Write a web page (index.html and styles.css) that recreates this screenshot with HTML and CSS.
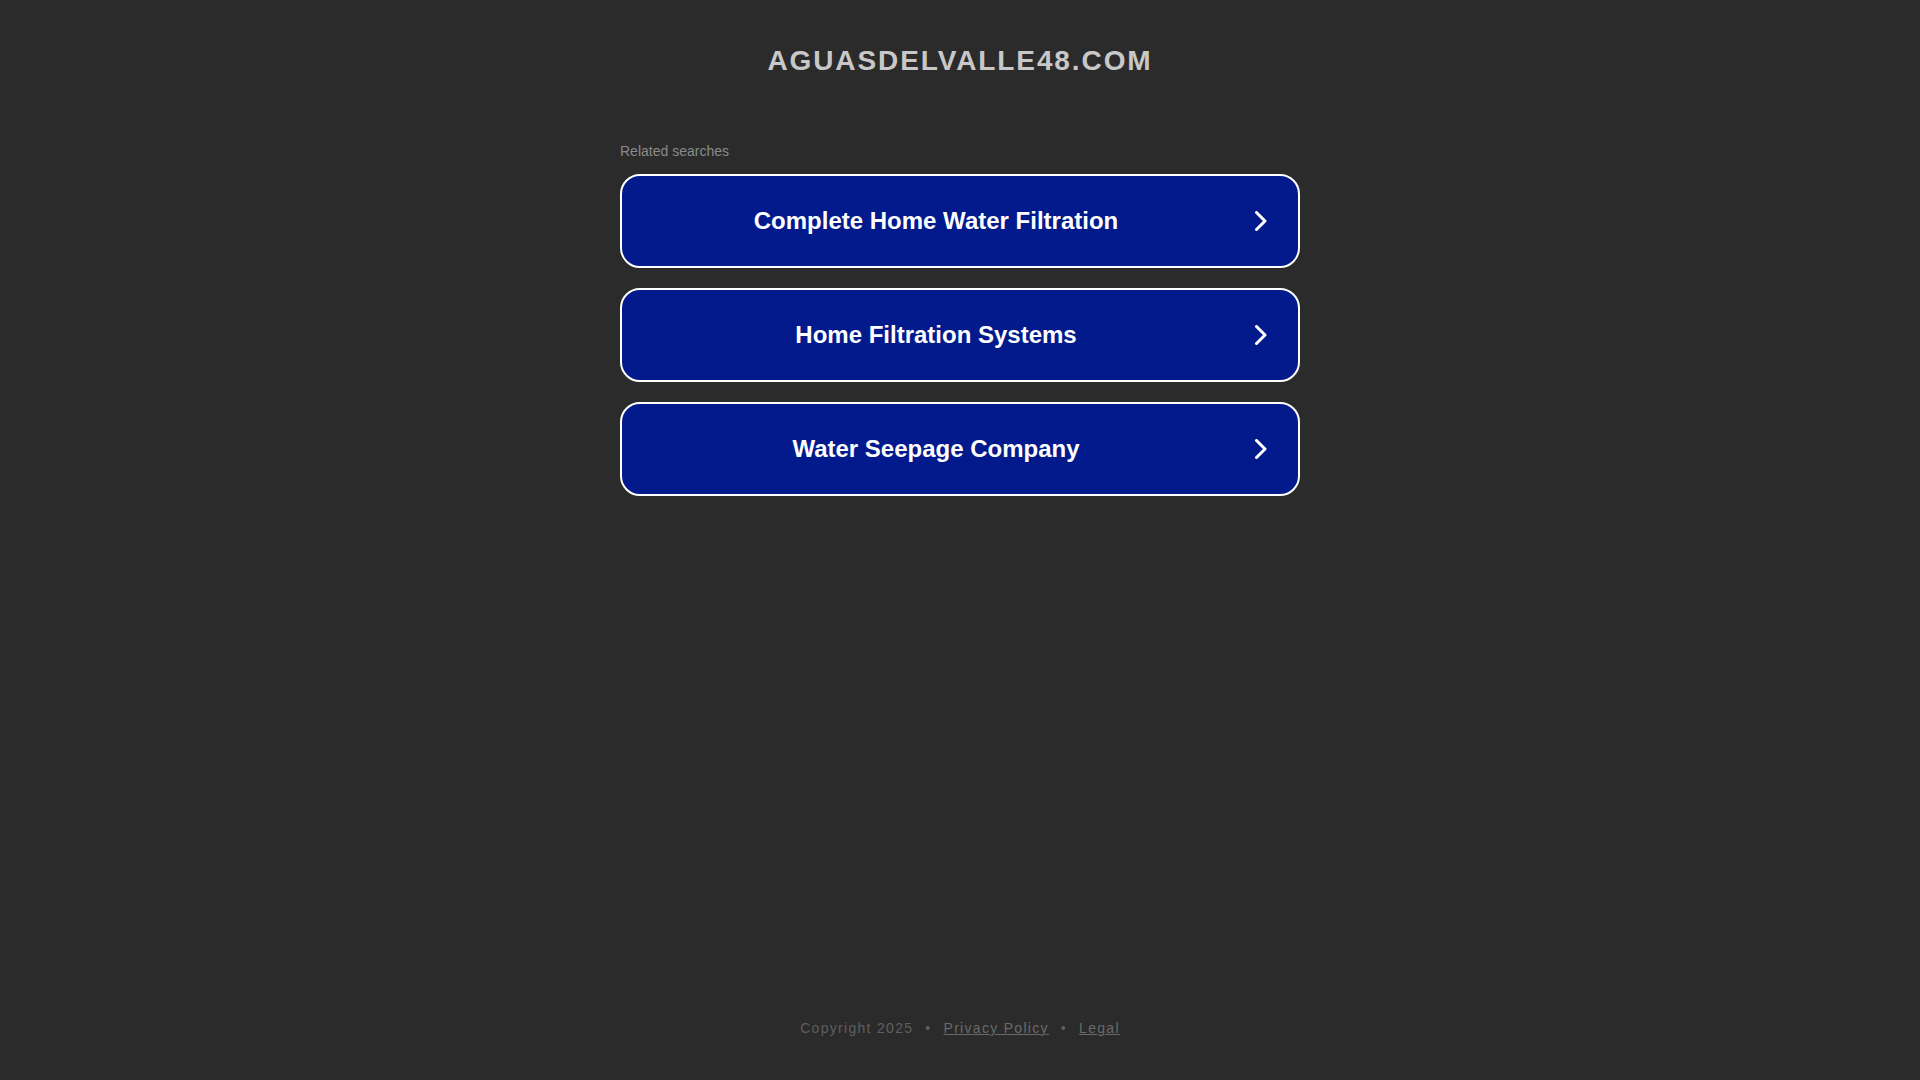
FILE: index.html
```html
<!DOCTYPE html>
<html lang="en">
<head>
    <meta charset="UTF-8">
    <meta name="viewport" content="width=device-width, initial-scale=1.0">
    <title>aguasdelvalle48.com</title>
    <link rel="stylesheet" href="styles.css">
</head>
<body>
    <div class="page">
        <header class="header">
            <h1 class="domain">aguasdelvalle48.com</h1>
        </header>

        <main class="searches">
            <p class="searches-label">Related searches</p>
            <a class="search-link" href="#">
                <span class="search-text">Complete Home Water Filtration</span>
                <svg class="chevron" viewBox="0 0 20 20" width="20" height="20"><path d="M6.5 1.5 L15 10 L6.5 18.5" /></svg>
            </a>
            <a class="search-link" href="#">
                <span class="search-text">Home Filtration Systems</span>
                <svg class="chevron" viewBox="0 0 20 20" width="20" height="20"><path d="M6.5 1.5 L15 10 L6.5 18.5" /></svg>
            </a>
            <a class="search-link" href="#">
                <span class="search-text">Water Seepage Company</span>
                <svg class="chevron" viewBox="0 0 20 20" width="20" height="20"><path d="M6.5 1.5 L15 10 L6.5 18.5" /></svg>
            </a>
        </main>

        <footer class="footer">
            <span>Copyright 2025</span>
            <span class="dot">&bull;</span>
            <a href="#">Privacy Policy</a>
            <span class="dot">&bull;</span>
            <a href="#">Legal</a>
        </footer>
    </div>
</body>
</html>
```

FILE: styles.css
```css
html, body {
    margin: 0;
    padding: 0;
}
body {
    background-color: #2b2b2b;
    font-family: Arial, "Liberation Sans", sans-serif;
}
.page {
    min-height: 100vh;
    display: flex;
    flex-direction: column;
    align-items: center;
}
.header {
    padding-top: 45px;
}
.domain {
    margin: 0;
    font-size: 28px;
    line-height: 32px;
    font-weight: bold;
    letter-spacing: 1.9px;
    text-transform: uppercase;
    color: #c8c8c8;
    text-align: center;
}
.searches {
    width: 680px;
    margin-top: 66px;
    display: flex;
    flex-direction: column;
    gap: 20px;
}
.searches-label {
    margin: 0 0 -5px 0;
    font-size: 14px;
    line-height: 16px;
    color: #8a8a8a;
}
.search-link {
    display: flex;
    align-items: center;
    height: 90px;
    border: 2px solid #ffffff;
    border-radius: 20px;
    background-color: #021a8b;
    color: #ffffff;
    text-decoration: none;
}
.search-text {
    flex: 1;
    text-align: center;
    font-size: 24px;
    font-weight: bold;
}
.chevron {
    margin-right: 28px;
    fill: none;
    stroke: #ffffff;
    stroke-width: 3;
    stroke-linecap: round;
    stroke-linejoin: round;
}
.footer {
    margin-top: auto;
    padding-bottom: 42px;
    display: flex;
    gap: 12px;
    font-size: 14px;
    line-height: 20px;
    letter-spacing: 1.3px;
    color: #5f5f5f;
}
.footer a {
    color: #6a6a6a;
    text-decoration: underline;
}
```
